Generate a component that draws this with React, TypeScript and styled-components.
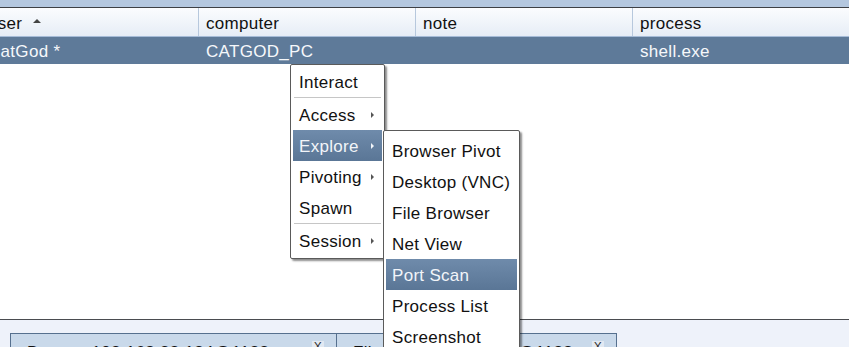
import styled, { createGlobalStyle } from "styled-components";

const GlobalStyle = createGlobalStyle`
  html, body {
    margin: 0;
    padding: 0;
    background: #ffffff;
    overflow: hidden;
  }
  body {
    font-family: "Liberation Sans", Arial, sans-serif;
  }
`;

const Screen = styled.div`
  display: flex;
  flex-direction: column;
  width: 849px;
  height: 347px;
  overflow: hidden;
  position: relative;
  font-size: 17px;
  letter-spacing: 0.3px;
  white-space: nowrap;
`;

const TopBand = styled.div`
  height: 7px;
  background: #b4c7df;
  border-bottom: 1px solid #3d3f44;
`;

const Table = styled.div`
  margin-left: -19px;
`;

const HeaderRow = styled.div`
  display: grid;
  grid-template-columns: 218px 217px 217px 1fr;
  height: 28px;
  background: linear-gradient(#fbfcfe, #e6edf6);
  border-bottom: 1px solid #a6bcd8;
`;

const HeaderCell = styled.div`
  display: flex;
  align-items: center;
  padding: 3px 0 0 7px;
  color: #111;
  border-right: 1px solid #b7c8dd;
  &:last-child {
    border-right: none;
  }
`;

const SortArrow = styled.span`
  width: 0;
  height: 0;
  margin-left: 11px;
  margin-bottom: 5px;
  border-left: 4px solid transparent;
  border-right: 4px solid transparent;
  border-bottom: 4px solid #444;
`;

const DataRow = styled.div`
  display: grid;
  grid-template-columns: 218px 217px 217px 1fr;
  height: 27px;
  background: #5e7a99;
`;

const DataCell = styled.div`
  display: flex;
  align-items: center;
  padding: 3px 0 0 7px;
  color: #f6f8fb;
`;

const Filler = styled.div`
  flex: 1;
  background: #ffffff;
`;

const Splitter = styled.div`
  height: 13px;
  background: #eef2fa;
  border-top: 1px solid #4a4c50;
  display: flex;
  justify-content: center;
`;

const Grip = styled.div`
  margin-top: 3px;
  margin-right: 24px;
  width: 20px;
  height: 3px;
  background-image: radial-gradient(circle, #8a96a8 0.8px, transparent 1px);
  background-size: 4px 3px;
`;

const TabStrip = styled.div`
  height: 14px;
  background: #eef2fa;
  display: flex;
  padding-left: 10px;
  overflow: hidden;
`;

const Tab = styled.div<{ width: number }>`
  width: ${(p) => p.width}px;
  height: 30px;
  flex-shrink: 0;
  box-sizing: border-box;
  display: flex;
  align-items: flex-start;
  justify-content: space-between;
  padding: 9px 12px 0 16px;
  background: #c9d9ea;
  border: 1px solid #56708e;
  border-bottom: none;
  color: #111;
  & + & {
    border-left: none;
  }
`;

const TabClose = styled.span`
  width: 12px;
  height: 12px;
  margin-top: -2px;
  background: #e2e9f2;
  font-size: 12px;
  line-height: 12px;
  text-align: center;
  color: #333;
`;

const Menu = styled.div<{ left: number; top: number; width: number; padTop: number }>`
  position: absolute;
  left: ${(p) => p.left}px;
  top: ${(p) => p.top}px;
  width: ${(p) => p.width}px;
  box-sizing: border-box;
  padding: ${(p) => p.padTop}px 2px 2px 2px;
  background: #ffffff;
  border: 1px solid #5a5a5a;
  border-radius: 2px;
  box-shadow: 2px 2px 2px rgba(0, 0, 0, 0.45);
`;

const Item = styled.div<{ active?: boolean }>`
  height: 31px;
  box-sizing: border-box;
  display: flex;
  align-items: center;
  justify-content: space-between;
  padding: 3px 8px 0 6px;
  color: ${(p) => (p.active ? "#f2f5f9" : "#111")};
  background: ${(p) =>
    p.active ? "linear-gradient(#6f8bab, #5a7696)" : "transparent"};
`;

const Caret = styled.span<{ active?: boolean }>`
  width: 0;
  height: 0;
  margin-bottom: 3px;
  border-top: 3px solid transparent;
  border-bottom: 3px solid transparent;
  border-left: 3px solid ${(p) => (p.active ? "#f2f5f9" : "#555")};
`;

const Separator = styled.div`
  height: 1px;
  margin: 0 1px 1px 1px;
  background: #c6c6c6;
`;

const mainItems: { label: string; sub?: boolean; sepBefore?: boolean }[] = [
  { label: "Interact" },
  { label: "Access", sub: true, sepBefore: true },
  { label: "Explore", sub: true },
  { label: "Pivoting", sub: true },
  { label: "Spawn" },
  { label: "Session", sub: true, sepBefore: true },
];

const exploreItems = [
  "Browser Pivot",
  "Desktop (VNC)",
  "File Browser",
  "Net View",
  "Port Scan",
  "Process List",
  "Screenshot",
];

export default function App() {
  return (
    <>
      <GlobalStyle />
      <Screen>
        <TopBand />
        <Table>
          <HeaderRow>
            <HeaderCell>
              user
              <SortArrow />
            </HeaderCell>
            <HeaderCell>computer</HeaderCell>
            <HeaderCell>note</HeaderCell>
            <HeaderCell>process</HeaderCell>
          </HeaderRow>
          <DataRow>
            <DataCell>CatGod *</DataCell>
            <DataCell>CATGOD_PC</DataCell>
            <DataCell></DataCell>
            <DataCell>shell.exe</DataCell>
          </DataRow>
        </Table>
        <Filler />
        <Splitter>
          <Grip />
        </Splitter>
        <TabStrip>
          <Tab width={327}>
            Beacon 192.168.88.134@1128
            <TabClose>X</TabClose>
          </Tab>
          <Tab width={280}>
            Files 192.168.88.134@1128
            <TabClose>X</TabClose>
          </Tab>
        </TabStrip>

        <Menu left={290} top={64} width={95} padTop={1}>
          {mainItems.map((it) => (
            <div key={it.label}>
              {it.sepBefore && <Separator />}
              <Item active={it.label === "Explore"}>
                {it.label}
                {it.sub && <Caret active={it.label === "Explore"} />}
              </Item>
            </div>
          ))}
        </Menu>

        <Menu left={383} top={130} width={137} padTop={4}>
          {exploreItems.map((label) => (
            <Item key={label} active={label === "Port Scan"}>
              {label}
            </Item>
          ))}
        </Menu>
      </Screen>
    </>
  );
}
